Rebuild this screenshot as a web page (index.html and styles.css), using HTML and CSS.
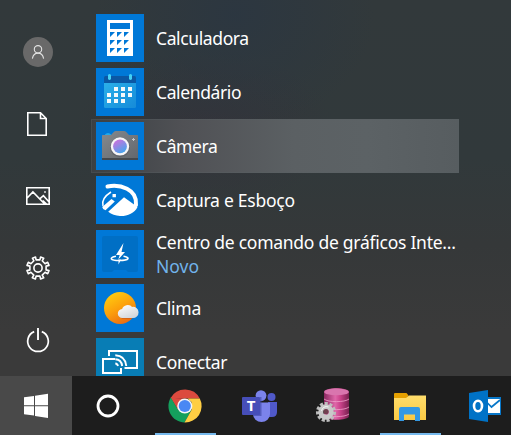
FILE: index.html
```html
<!DOCTYPE html>
<html lang="pt-BR">
<head>
<meta charset="utf-8">
<title>Menu Iniciar</title>
<link rel="stylesheet" href="styles.css">
</head>
<body>
<div class="desktop">
  <main class="menu">
    <nav class="rail">
      <div class="rail-item"><div class="avatar">
        <svg width="14" height="16" viewBox="0 0 14 16" fill="none" stroke="#e4e4e4" stroke-width="1.1"><circle cx="7" cy="5.300" r="3.700"/><path d="M1.400 14.600C2 11.300 4 9.100 7 9.100s5 2.200 5.600 5.500"/></svg>
      </div></div>
      <div class="rail-item">
        <svg class="doc" width="20" height="24" viewBox="0 0 20 24" fill="none" stroke="#fff" stroke-width="1.6"><path d="M.8.800H13.500L19.200 6.500v16.700H.8zM13.500.800V6.500h5.700"/></svg>
      </div>
      <div class="rail-item">
        <svg width="24" height="18" viewBox="0 0 24 18" fill="none" stroke="#fff" stroke-width="1.600"><path d="M.8.800h22.400v16.400H.8zM.9 11.300l6-6.300 12 12.200M13.200 12.300l4.200-3.600 5.700 6.300M16.800 13.500l3.700 3.600"/><path d="M18.200 5h1.600" stroke-width="1.700"/></svg>
      </div>
      <div class="rail-item">
        <svg width="24" height="24" viewBox="0 0 24 24" fill="none" stroke="#fff" stroke-width="1.600" stroke-linejoin="round"><path d="M10.100 3.900 9.500 1 6.400 2.200 7.900 4.800 4.900 7.800 2.300 6.300 1 9.400 3.900 10.100V13.900L1 14.600 2.300 17.700 4.900 16.200 7.800 19.100 6.300 21.700 9.400 23 10.100 20.100H13.900L14.600 23 17.700 21.700 16.200 19.100 19.100 16.200 21.700 17.700 23 14.600 20.100 13.900V10.100L23 9.400 21.700 6.300 19.100 7.800 16.200 4.800 17.700 2.300 14.600 1 13.900 3.900Z"/><circle cx="12" cy="12" r="4.100"/></svg>
      </div>
      <div class="rail-item">
        <svg width="24" height="26" viewBox="0 0 24 26" fill="none" stroke="#fff" stroke-width="1.700"><path d="M8.200 4.600a10.300 10.300 0 1 0 7.600 0"/><path d="M12 1v12" stroke-width="1.900"/></svg>
      </div>
    </nav>

    <div class="apps">
      <div class="app">
        <div class="tile"><svg viewBox="0 0 48 48"><path fill="#fff" d="M11 6h26v36H11z"/><path fill="#0078d7" d="M14 9h20v6H14zM14 18h5l-5 5zM21 18h5l-5 5zM28 18h5l-5 5zM14 26h5l-5 5zM21 26h5l-5 5zM28 26h5l-5 5zM14 34h5l-5 5zM21 34h5l-5 5zM28 34h5l-5 5z"/></svg></div>
        <div class="label"><span class="tight">Calculadora</span></div>
      </div>
      <div class="app">
        <div class="tile"><svg viewBox="0 0 48 48"><defs><linearGradient id="cal" x1="0" y1="0" x2="1" y2="1"><stop stop-color="#2db2ea"/><stop offset="1" stop-color="#158bd9"/></linearGradient></defs><rect x="8" y="10" width="32" height="30" rx="1.500" fill="url(#cal)"/><path fill="#0b57a4" d="M9.500 8h29A1.500 1.500 0 0 1 40 9.500V15H8V9.500A1.500 1.500 0 0 1 9.500 8z"/><path fill="#43d1f5" d="M12 7q1.500-2 3 0v4q-1.500 2-3 0zM33 7q1.500-2 3 0v4q-1.500 2-3 0z"/><path fill="#f5f9fb" d="M18 19h4v4h-4zM25 19h4v4h-4zM32 19h4v4h-4zM11 25h4v4h-4zM18 25h4v4h-4zM25 25h4v4h-4zM32 25h4v4h-4zM11 31h4v4h-4zM18 31h4v4h-4zM25 31h4v4h-4z"/></svg></div>
        <div class="label"><span class="tight">Calendário</span></div>
      </div>
      <div class="app hover">
        <div class="tile"><svg viewBox="0 0 48 48"><defs><linearGradient id="cam" x1="0" y1="0" x2="1" y2="1"><stop stop-color="#858a8e"/><stop offset="1" stop-color="#62666b"/></linearGradient><linearGradient id="lens" x1=".2" y1="0" x2=".8" y2="1"><stop offset=".15" stop-color="#bb78df"/><stop offset="1" stop-color="#3ba9ef"/></linearGradient></defs><path fill="#20aaeb" d="M9 14v-1.500q1-1.500 3-1.500t3 1.500V14z"/><path fill="url(#cam)" d="M6.800 13H15l3-3.200Q18.700 9 20 9h8q1.300 0 2 .8l3 3.200h8.200q.8 0 .8.800V38H6V13.800q0-.8.800-.8z"/><path fill="#44494e" d="M6 36h36v2H6z"/><circle cx="24" cy="25.200" r="10" fill="#50545a" opacity=".45"/><circle cx="24" cy="24.400" r="9.200" fill="#f6f5f7"/><circle cx="24" cy="24.400" r="6.900" fill="url(#lens)"/><path stroke="#c3c6c9" d="M37.500 16v3M36 17.500h3"/></svg></div>
        <div class="label"><span class="tight">Câmera</span></div>
      </div>
      <div class="app">
        <div class="tile"><svg viewBox="0 0 48 48"><path d="M11.500 10.500C24 8 41.500 13 40 29" fill="none" stroke="#fff" stroke-width="4" stroke-linecap="round"/><path d="M15 16C8 20.500 5.800 26 7 30" fill="none" stroke="#fff" stroke-width="1.500"/><path fill="#fff" d="M16.500 18h3.400v3.200h-3.400zM6.200 31 15.500 22.900 18.800 25.500 9.500 34.200Q6.500 33.200 6.200 31zM12.200 35.800 28 21.300 41.500 31C38.500 37.500 31 40.300 24 40 19.500 39.800 15.500 38.500 12.200 35.800z"/></svg></div>
        <div class="label"><span>Captura e Esboço</span></div>
      </div>
      <div class="app">
        <div class="tile"><svg viewBox="0 0 48 48"><path fill="#006fc5" d="M8 6h32q2 0 2 2v32q0 2-2 2h-8l-2-2H18l-2 2H8q-2 0-2-2V8q0-2 2-2z"/><path fill="#fff" d="M27.500 13 20 25h3.700L22.300 29.500 29 22h-3.500zM25 29.500 22.500 34.500V29.500z"/><path d="M20 26.300c-7 1-6.500 4.200 3.500 4.200s11-3.300 4-4.200" fill="none" stroke="#fff" stroke-width="1.600"/></svg></div>
        <div class="label"><span>Centro de comando de gráficos Inte...</span><span class="new">Novo</span></div>
      </div>
      <div class="app">
        <div class="tile"><svg viewBox="0 0 48 48"><defs><linearGradient id="sun" x1=".2" y1="0" x2=".75" y2="1"><stop stop-color="#ffcf10"/><stop offset=".5" stop-color="#fca00b"/><stop offset="1" stop-color="#e96613"/></linearGradient><linearGradient id="cloud" x1="0" y1="0" x2=".6" y2="1"><stop stop-color="#fff"/><stop offset="1" stop-color="#d3d6da"/></linearGradient></defs><circle cx="24" cy="24" r="16" fill="url(#sun)"/><path fill="#c45114" opacity=".5" d="M25 33.500h11v1.500H26z"/><path fill="url(#cloud)" d="M26.500 34a4.500 4.500 0 0 1-.4-9A6 6 0 0 1 36 22.900 5.600 5.600 0 1 1 36.500 34z"/></svg></div>
        <div class="label"><span>Clima</span></div>
      </div>
      <div class="app">
        <div class="tile teal"><svg viewBox="0 0 48 48" fill="none" stroke="#fff"><path stroke-width="2" d="M13 18v-5h28v17H28.500M19 21H7v14h18v-5"/><path stroke-width="1.900" d="M19.300 25.500q2.200.200 2.700 2.500M19.300 21.300q6 .2 6.900 6.700M19.300 17.200q10 .5 11 10.800"/></svg></div>
        <div class="label"><span class="tight">Conectar</span></div>
      </div>
    </div>
  </main>

  <footer class="taskbar">
    <div class="task start"><svg width="24" height="26" viewBox="0 0 24 26"><path fill="#fff" d="M0 4.300 10 3v9.300H0zM11 2.800 24 .8v11.500H11zM0 13.300h10v9.200L0 21.300zM11 13.300h13v11.800l-13-2z"/></svg></div>
    <div class="task search"><svg width="24" height="24" viewBox="0 0 24 24"><circle cx="12" cy="12" r="10" fill="none" stroke="#fff" stroke-width="2.800"/></svg></div>
    <div class="task open"><svg class="nudge" width="36" height="36" viewBox="0 0 36 36"><path fill="#db4a3e" d="M3.600 10A16.500 16.500 0 0 1 32.800 10.500H17z"/><path fill="#db4a3e" d="M3.600 9.700 11.300 22.500 17 10.500z"/><path fill="#14a05d" d="M3.800 9.500A16.500 16.500 0 0 0 17.500 34.500L24.500 22 11.200 21.900z"/><path fill="#ffce43" d="M32.800 10.500A16.500 16.500 0 0 1 17.500 34.500L24.800 21.500 24.500 14l-4-3.500z"/><circle cx="17.800" cy="18" r="7.600" fill="#f6f6f6"/><circle cx="17.800" cy="18" r="6.100" fill="#4988f4"/></svg></div>
    <div class="task"><svg width="36" height="36" viewBox="0 0 36 36"><circle cx="28.500" cy="9" r="4" fill="#5059c9"/><path fill="#5059c9" d="M25 14h9v10q0 5-5 5h-4z"/><circle cx="18" cy="7.600" r="5.400" fill="#7b83eb"/><path fill="#7b83eb" d="M10 14.500h17V26a8.500 8 0 0 1-17 0z"/><path fill="#404aa8" opacity=".65" d="M17 9h1.500v19H10v-2h7z"/><rect x="-1" y="9" width="18" height="18" rx="1" fill="#464eb8"/><text class="logo-letter" x="8" y="22.900" text-anchor="middle">T</text></svg></div>
    <div class="task"><svg class="nudge" width="36" height="38" viewBox="0 0 36 38"><defs><linearGradient id="db"><stop stop-color="#8b2860"/><stop offset=".45" stop-color="#df67a9"/><stop offset=".65" stop-color="#cb438b"/><stop offset="1" stop-color="#78204f"/></linearGradient></defs><path fill="url(#db)" d="M7 5C7 0 32 0 32 5v24c0 5-25 5-25 0z"/><ellipse cx="19.500" cy="4.900" rx="12.300" ry="3.400" fill="#d975ae"/><path d="M7 12c4 3.500 21 3.500 25 0M7 20c4 3.500 21 3.500 25 0M7 27c4 3.500 21 3.500 25 0" fill="none" stroke="#efa1ca" stroke-width=".8"/><circle cx="9" cy="25" r="8.300" fill="none" stroke="#bdbdbd" stroke-width="3.500" stroke-dasharray="3 1.700"/><circle cx="9" cy="25" r="5.200" fill="none" stroke="#c9c9c9" stroke-width="5"/><circle cx="9" cy="24.500" r="2.500" fill="#70404f"/><path d="M4.500 24a5 5 0 0 1 7-4" fill="none" stroke="#f4f4f4"/></svg></div>
    <div class="task open"><svg class="nudge" width="34" height="34" viewBox="0 0 34 34"><defs><linearGradient id="folder" x1="0" y1="0" x2="0" y2="1"><stop stop-color="#ffdd6c"/><stop offset="1" stop-color="#fac943"/></linearGradient></defs><path fill="#e5a000" d="M2 4h11.500l2 2.500-2 3.500H1V5q0-1 1-1z"/><path fill="url(#folder)" d="M1 9h12l3-2.500h17V31H1z"/><path fill="#3498e3" d="M8 18h17q2 0 2 2v12h-5v-6.500H11V32H6V20q0-2 2-2z"/></svg></div>
    <div class="task"><svg class="nudge" width="34" height="34" viewBox="0 0 34 34"><path fill="#0877c9" d="M18 8h15v18H18z"/><path fill="#fff" d="M19 10h13v14H19z"/><path d="m19 13.500 4.500 4.500L32 11" fill="none" stroke="#0877c9" stroke-width="1.700"/><path fill="#0072c6" d="M1 4 20 1v32L1 30z"/><ellipse cx="10" cy="17" rx="4" ry="5.200" fill="none" stroke="#fff" stroke-width="2.600"/></svg></div>
  </footer>
</div>
</body>
</html>
```
FILE: styles.css
```css
* { box-sizing: border-box; }
body { margin: 0; background: #1d1d1d; }
svg { display: block; flex: none; overflow: visible; }

.desktop {
  width: 511px;
  height: 435px;
  display: flex;
  flex-direction: column;
  overflow: hidden;
  font-family: "Noto Sans", "Open Sans", sans-serif;
}
.menu {
  height: 376px;
  display: flex;
  overflow: hidden;
  background:
    radial-gradient(ellipse 140px 115px at 235px 15px, rgba(40, 53, 68, .6), transparent),
    radial-gradient(ellipse 130px 80px at 205px 130px, rgba(52, 49, 58, .7), transparent),
    linear-gradient(#32393b, #31393b 42%, #353839 65%, #3a3a3a 88%);
}
.rail { width: 76px; padding-top: 16px; flex: none; }
.rail-item { height: 72px; display: flex; align-items: center; justify-content: center; }
.doc { margin-right: 2px; }
.avatar {
  width: 30px;
  height: 30px;
  border-radius: 50%;
  background: #696969;
  display: flex;
  align-items: center;
  justify-content: center;
}

.apps { margin-left: 15px; padding-top: 11px; width: 368px; flex: none; }
.app {
  height: 54px;
  padding-left: 5px;
  display: flex;
  align-items: center;
  gap: 12px;
}
.hover {
  background: linear-gradient(90deg, #3b4043, #505155 25%, #5b6063 55%, #5c6265 75%, #575d60);
  box-shadow: inset 0 0 0 1px rgba(90, 96, 99, .35);
}
.tile { width: 48px; height: 48px; background: #0078d7; flex: none; }
.teal { background: #087db5; }
.label {
  display: flex;
  flex-direction: column;
  color: #fff;
  font-size: 17.5px;
  line-height: 24px;
  letter-spacing: -.26px;
  white-space: nowrap;
}
.tight { letter-spacing: -.38px; }
.new { color: #71b3eb; letter-spacing: 0; }

.taskbar {
  height: 59px;
  display: flex;
  flex: none;
  background: #1d1d1d;
}
.task {
  width: 75px;
  height: 59px;
  flex: none;
  display: flex;
  align-items: center;
  justify-content: center;
}
.start { width: 72px; background: #494949; }
.search { width: 72px; margin-right: 4px; }
.nudge { margin-right: 2px; }
.open {
  background: linear-gradient(#76b9ed, #76b9ed) center bottom / 61px 2px no-repeat;
}
.logo-letter {
  font: bold 15px "Open Sans", sans-serif;
  fill: #fff;
}
```
